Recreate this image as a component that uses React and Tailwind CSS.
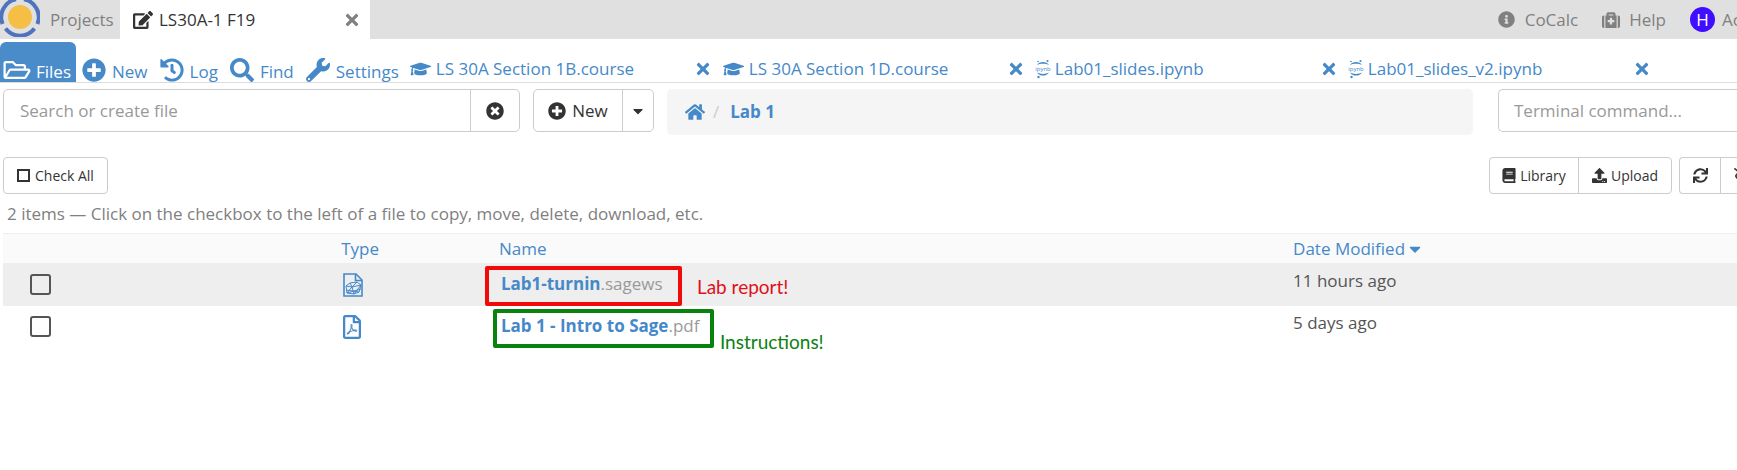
import React from "react";
import {
  FaBook,
  FaCaretDown,
  FaEdit,
  FaGraduationCap,
  FaHistory,
  FaHome,
  FaInfoCircle,
  FaMedkit,
  FaPlusCircle,
  FaRegEyeSlash,
  FaRegFilePdf,
  FaRegFolderOpen,
  FaSearch,
  FaSync,
  FaTimes,
  FaTimesCircle,
  FaUpload,
  FaWrench,
} from "react-icons/fa";

const Logo = () => (
  <svg viewBox="0 0 40 40" className="h-10 w-10 shrink-0">
    <circle cx="20" cy="20" r="12" fill="#f5bf45" />
    <g fill="none" stroke="#4f74bd" strokeWidth="4">
      <path d="M5.5 31.5A18.3 18.3 0 0 0 34.5 31.5" />
      <path d="M2.6 27A18.3 18.3 0 0 1 16 2.2" />
      <path d="M37.4 27A18.3 18.3 0 0 0 24 2.2" />
    </g>
  </svg>
);

const JupyterIcon = () => (
  <svg
    viewBox="0 0 14 18"
    className="mr-[5px] h-[18px] w-[14px] shrink-0 overflow-visible"
    fill="currentColor"
  >
    <path d="M1 5C3 1 11 1 13 5C10 3.400 4 3.400 1 5Z" />
    <path d="M1 12.500C3 16.600 11 16.600 13 12.500C10 14.400 4 14.400 1 12.500Z" />
    <circle cx="2" cy="1.500" r="0.800" />
    <circle cx="11.500" cy="1" r="1.100" />
    <circle cx="2.500" cy="17" r="1.200" />
    <text x="7" y="10.500" fontSize="6" textAnchor="middle" fontFamily="Open Sans">
      ipynb
    </text>
  </svg>
);

const CourseIcon = () => <FaGraduationCap className="mr-[5px] h-5 w-[21px] shrink-0" />;

const SageIcon = () => (
  <svg
    viewBox="0 0 20 24"
    className="ml-[2px] h-6 w-5"
    fill="none"
    stroke="currentColor"
    strokeWidth="1.600"
  >
    <path d="M1 1H13L19 7V23H1Z" />
    <path d="M12.500 1V7.500H19" />
    <path
      strokeWidth="1"
      d="M3 13L7 10L14 9L18 12L16 19L11 21L4 20ZM3 13L9 14L14 9M7 10L9 14L4 20M9 14L11 21M9 14L18 12L11 21M4 20L18 16M3 17L16 19"
    />
  </svg>
);

const PdfIcon = () => <FaRegFilePdf className="ml-px h-6 w-5" />;

const NAV_ITEMS = [
  { label: "New", Icon: FaPlusCircle },
  { label: "Log", Icon: FaHistory },
  { label: "Find", Icon: FaSearch },
  { label: "Settings", Icon: FaWrench },
];

const OPEN_FILES = [
  { name: "LS 30A Section 1B.course", Icon: CourseIcon },
  { name: "LS 30A Section 1D.course", Icon: CourseIcon },
  { name: "Lab01_slides.ipynb", Icon: JupyterIcon },
  { name: "Lab01_slides_v2.ipynb", Icon: JupyterIcon },
];

const FILES = [
  {
    name: "Lab1-turnin",
    ext: ".sagews",
    modified: "11 hours ago",
    Icon: SageIcon,
    row: "bg-[#eeeeee]",
    box: "-left-[14px] -top-[6px] h-10 w-[197px] border-[#f20a0a]",
    note: "Lab report!",
    noteStyle: "left-[198px] top-[3px] text-[#e0101c]",
  },
  {
    name: "Lab 1 - Intro to Sage",
    ext: ".pdf",
    modified: "5 days ago",
    Icon: PdfIcon,
    row: "bg-white",
    box: "-left-[6px] -top-[5px] h-[39px] w-[221px] border-[#0a820f]",
    note: "Instructions!",
    noteStyle: "left-[221px] top-4 text-[#0a820f]",
  },
];

const TopBar = () => (
  <header className="flex h-[39px] items-center overflow-hidden bg-[#e0e0e0] text-[#808080]">
    <div className="-mt-[3px] self-start">
      <Logo />
    </div>
    <a href="#projects" className="ml-[10px] w-[70px]">
      Projects
    </a>
    <div className="flex h-full w-[250px] shrink-0 items-center bg-white pl-[13px] pr-[11px] text-[#333333]">
      <FaEdit className="mr-[6px] h-[18px] w-5" />
      <a href="#ls30a">LS30A-1 F19</a>
      <button aria-label="Close project" className="ml-auto text-[#808080]">
        <FaTimes className="h-[18px] w-[14px]" />
      </button>
    </div>
    <nav className="ml-auto flex shrink-0 items-center">
      <a href="#about" className="flex items-center">
        <FaInfoCircle className="mr-[10px] h-[17px] w-[17px]" />
        CoCalc
      </a>
      <a href="#help" className="ml-6 flex items-center">
        <FaMedkit className="mr-[9px] h-[18px] w-[18px]" />
        Help
      </a>
      <a href="#account" className="ml-6 flex items-center">
        <span className="mr-[7px] flex h-[25px] w-[25px] items-center justify-center rounded-full bg-[#3f0dff] text-white">
          H
        </span>
        <span className="w-[15px] overflow-hidden">Account</span>
      </a>
    </nav>
  </header>
);

const ProjectNav = () => (
  <nav className="flex h-11 items-end overflow-hidden border-b border-[#dddddd] text-[#4589c9]">
    <a
      href="#files"
      className="flex h-10 w-[76px] shrink-0 items-end rounded-t-md bg-[#4a8bca] pl-[3px] leading-5 text-white"
    >
      <FaRegFolderOpen className="mr-[5px] h-6 w-7" />
      Files
    </a>
    {NAV_ITEMS.map(({ label, Icon }) => (
      <a
        key={label}
        href={`#${label}`}
        className="mx-[6px] flex shrink-0 items-end leading-5"
      >
        <Icon className="mr-[6px] h-6 w-6" />
        {label}
      </a>
    ))}
    {OPEN_FILES.map(({ name, Icon }) => (
      <div key={name} className="flex w-[313px] shrink-0 items-center pb-px pl-[5px] pr-2">
        <Icon />
        <a href={`#${name}`}>{name}</a>
        <button aria-label={`Close ${name}`} className="ml-auto">
          <FaTimes className="h-[18px] w-[14px]" />
        </button>
      </div>
    ))}
  </nav>
);

const Toolbar = () => (
  <div className="flex items-start overflow-hidden pl-[3px] pt-[6px]">
    <div className="flex h-[43px] w-[517px] shrink-0 rounded-[5px] border border-[#cccccc]">
      <input
        aria-label="Search or create file"
        placeholder="Search or create file"
        className="min-w-0 flex-1 px-4 placeholder:text-[#999999]"
      />
      <button
        aria-label="Clear search"
        className="flex w-[49px] items-center justify-center border-l border-[#cccccc]"
      >
        <FaTimesCircle className="h-[18px] w-[18px]" />
      </button>
    </div>
    <div className="ml-[13px] flex h-[43px] w-[121px] shrink-0 rounded-[5px] border border-[#cccccc]">
      <button className="flex flex-1 items-center justify-center">
        <FaPlusCircle className="mr-[6px] h-[18px] w-[18px]" />
        New
      </button>
      <button
        aria-label="More file types"
        className="flex w-[31px] items-center justify-center border-l border-[#cccccc]"
      >
        <FaCaretDown className="h-4 w-4" />
      </button>
    </div>
    <div className="ml-[13px] flex h-[46px] flex-1 items-center rounded-[5px] bg-[#f5f5f5] pl-[18px] text-[#4589c9]">
      <a href="#home" aria-label="Home">
        <FaHome className="h-[18px] w-5" />
      </a>
      <span className="ml-2 mr-[11px] text-[#cccccc]">/</span>
      <a href="#lab1" className="font-bold">
        Lab 1
      </a>
    </div>
    <input
      aria-label="Terminal command"
      placeholder="Terminal command..."
      className="ml-[25px] h-[43px] w-[239px] shrink-0 rounded-l-[5px] border border-r-0 border-[#cccccc] px-[15px] placeholder:text-[#999999]"
    />
  </div>
);

const ActionRow = () => (
  <div className="mt-[22px] flex h-[37px] overflow-hidden pl-[3px] text-[14px]">
    <button className="flex items-center rounded border border-[#cccccc] px-[13px]">
      <span className="mr-[5px] h-[13px] w-[13px] border-2 border-[#333333]" />
      Check All
    </button>
    <div className="ml-auto flex rounded border border-[#cccccc]">
      <button className="flex w-[88px] items-center justify-center">
        <FaBook className="mr-1 h-[15px] w-[14px]" />
        Library
      </button>
      <button className="flex w-[93px] items-center justify-center border-l border-[#cccccc]">
        <FaUpload className="mr-1 h-[15px] w-[15px]" />
        Upload
      </button>
    </div>
    <div className="ml-[7px] flex w-[58px] rounded-l border border-r-0 border-[#cccccc]">
      <button aria-label="Refresh" className="flex w-10 shrink-0 items-center justify-center">
        <FaSync className="h-[15px] w-[15px]" />
      </button>
      <button
        aria-label="Hidden files"
        className="flex flex-1 items-center overflow-hidden border-l border-[#cccccc] pl-[13px]"
      >
        <FaRegEyeSlash className="h-4 w-5 shrink-0" />
      </button>
    </div>
  </div>
);

const FileTable = () => (
  <table className="ml-[3px] w-[calc(100%-3px)] table-fixed text-left">
    <colgroup>
      <col className="w-[19.5%]" />
      <col className="w-[9.1%]" />
      <col className="w-[45.8%]" />
      <col />
    </colgroup>
    <thead>
      <tr className="h-[30px] border-y border-[#eeeeee] bg-[#fafafa] text-[#4589c9]">
        <th aria-label="Select" />
        <th className="font-normal">Type</th>
        <th className="font-normal">Name</th>
        <th className="font-normal">
          <button className="flex items-center">
            Date Modified
            <FaCaretDown className="ml-px h-[18px] w-[18px]" />
          </button>
        </th>
      </tr>
    </thead>
    <tbody>
      {FILES.map(({ name, ext, modified, Icon, row, box, note, noteStyle }) => (
        <tr key={name} className={`h-[42px] ${row}`}>
          <td className="pl-[27px]">
            <input
              type="checkbox"
              aria-label={`Select ${name}${ext}`}
              className="block h-[21px] w-[21px] appearance-none rounded-[3px] border-2 border-[#555555]"
            />
          </td>
          <td className="text-[#4589c9]">
            <Icon />
          </td>
          <td className="pb-[2px]">
            <div className="relative">
              <a href={`#${name}`} className="pl-[2px] text-[#999999]">
                <span className="font-bold text-[#4589c9]">{name}</span>
                {ext}
              </a>
              <div className={`pointer-events-none absolute rounded-[2px] border-4 ${box}`} />
              <span
                className={`absolute whitespace-nowrap font-["Lato",sans-serif] text-[19px] ${noteStyle}`}
              >
                {note}
              </span>
            </div>
          </td>
          <td className="pb-[7px] text-[#555555]">{modified}</td>
        </tr>
      ))}
    </tbody>
  </table>
);

const App = () => {
  return (
    <div className='min-h-screen bg-white font-["Open_Sans",sans-serif] text-[17px] leading-6 text-[#333333]'>
      <TopBar />
      <ProjectNav />
      <Toolbar />
      <ActionRow />
      <p className="mb-[7px] mt-2 pl-[7px] text-[#808080]">
        2 items — Click on the checkbox to the left of a file to copy, move,
        delete, download, etc.
      </p>
      <FileTable />
    </div>
  );
};

export default App;
